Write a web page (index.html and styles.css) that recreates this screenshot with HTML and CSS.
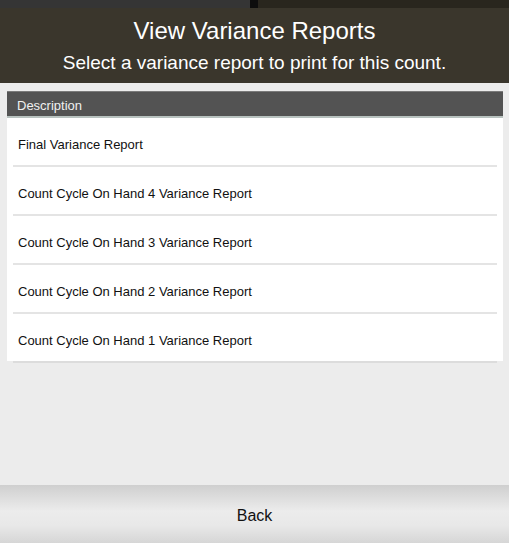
FILE: index.html
```html
<!DOCTYPE html>
<html lang="en">
<head>
    <meta charset="UTF-8">
    <meta name="viewport" content="width=device-width, initial-scale=1.0">
    <title>View Variance Reports</title>
    <link rel="stylesheet" href="styles.css">
</head>
<body>
    <div class="topStrip">
        <div class="topLeft"></div>
        <div class="topDivider"></div>
        <div class="topRight"></div>
    </div>

    <div class="header">
        <h1>View Variance Reports</h1>
        <p>Select a variance report to print for this count.</p>
    </div>

    <div class="content">
        <div class="tableHead">Description</div>
        <div class="list">
            <div class="item"><div class="itemText">Final Variance Report</div><div class="line"></div></div>
            <div class="item"><div class="itemText">Count Cycle On Hand 4 Variance Report</div><div class="line"></div></div>
            <div class="item"><div class="itemText">Count Cycle On Hand 3 Variance Report</div><div class="line"></div></div>
            <div class="item"><div class="itemText">Count Cycle On Hand 2 Variance Report</div><div class="line"></div></div>
            <div class="item"><div class="itemText">Count Cycle On Hand 1 Variance Report</div><div class="line"></div></div>
        </div>
    </div>

    <div class="footerBar">
        <button class="backButton">Back</button>
    </div>
</body>
</html>
```

FILE: styles.css
```css
    body {
        margin: 0;
        width: 509px;
        height: 543px;
        display: flex;
        flex-direction: column;
        background: #ececec;
        font-family: "Liberation Sans", Arial, sans-serif;
        overflow: hidden;
    }
    .topStrip {
        display: flex;
        height: 8px;
    }
    .topLeft {
        width: 250px;
        background: #353535;
    }
    .topDivider {
        width: 8px;
        background: #0d0d0d;
    }
    .topRight {
        flex: 1;
        background: #29261e;
    }
    .header {
        height: 75px;
        background: #3a362c;
        color: #fff;
        text-align: center;
        display: flex;
        flex-direction: column;
        align-items: center;
    }
    .header h1 {
        margin: 9px 0 0;
        font-size: 24px;
        font-weight: normal;
        line-height: 28px;
    }
    .header p {
        margin: 7px 0 0;
        font-size: 19px;
        line-height: 22px;
    }
    .content {
        flex: 1;
        padding: 8px 6px 0 7px;
    }
    .tableHead {
        height: 24px;
        line-height: 28px;
        background: #535353;
        border-top: 1px solid #7a7a7a;
        border-bottom: 2px solid #b8c2bf;
        color: #f0f0f0;
        font-size: 13px;
        padding-left: 10px;
    }
    .item {
        background: #fff;
    }
    .itemText {
        height: 47px;
        line-height: 53px;
        padding-left: 11px;
        font-size: 13px;
        color: #111;
    }
    .line {
        height: 2px;
        margin: 0 6px;
        background: #e4e4e4;
    }
    .item:last-child {
        background: transparent;
    }
    .item:last-child .itemText {
        background: #fff;
    }
    .item:last-child .line {
        background: #dcdcdc;
    }
    .footerBar {
        height: 58px;
        background: linear-gradient(#cfcfcf, #ececec 45%, #e8e8e8 70%, #d6d6d6);
        display: flex;
        align-items: center;
        justify-content: center;
    }
    .backButton {
        background: none;
        border: none;
        font-family: inherit;
        font-size: 16px;
        color: #111;
        padding: 0;
        margin-top: 4px;
        cursor: pointer;
    }
```
